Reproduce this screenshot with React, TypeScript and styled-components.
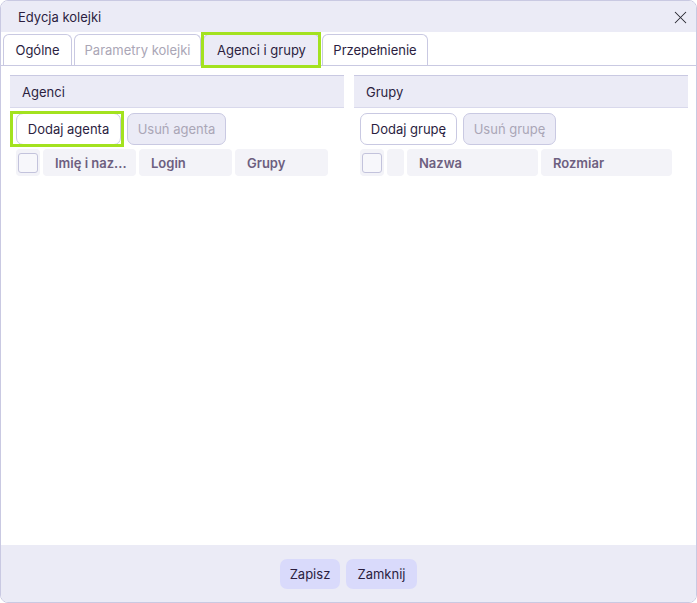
import { createGlobalStyle, styled } from 'styled-components';
import { X } from 'lucide-react';

const GlobalStyle = createGlobalStyle`
  html, body {
    margin: 0;
    padding: 0;
    background: #ffffff;
  }
  body {
    font-family: Inter, 'Noto Sans', sans-serif;
    font-size: 13px;
    color: #2b1e3f;
  }
`;

const tabs = [
  { label: 'Ogólne', width: 69 },
  { label: 'Parametry kolejki', width: 127, disabled: true },
  { label: 'Agenci i grupy', width: 117, active: true },
  { label: 'Przepełnienie', width: 106 },
];

const App = () => {
  return (
    <>
      <GlobalStyle />
      <Dialog>
        <Header>
          <Title>Edycja kolejki</Title>
          <CloseButton aria-label="Zamknij">
            <X size={21} strokeWidth={1.2} />
          </CloseButton>
        </Header>
        <TabBar>
          {tabs.map((t) => (
            <Tab key={t.label} $width={t.width} $active={t.active} $disabled={t.disabled}>
              {t.label}
            </Tab>
          ))}
        </TabBar>
        <Body>
          <Panel>
            <PanelHeader>Agenci</PanelHeader>
            <ButtonRow>
              <ActionButton $width={105} $focused>
                Dodaj agenta
              </ActionButton>
              <ActionButton $width={99} disabled>
                Usuń agenta
              </ActionButton>
            </ButtonRow>
            <TableHead $columns="24px 93px 93px 93px">
              <CheckCell>
                <CheckBox />
              </CheckCell>
              <HeadCell>Imię i naz...</HeadCell>
              <HeadCell>Login</HeadCell>
              <HeadCell>Grupy</HeadCell>
            </TableHead>
          </Panel>
          <Panel>
            <PanelHeader>Grupy</PanelHeader>
            <ButtonRow>
              <ActionButton $width={97}>Dodaj grupę</ActionButton>
              <ActionButton $width={93} disabled>
                Usuń grupę
              </ActionButton>
            </ButtonRow>
            <TableHead $columns="24px 17px 131px 131px">
              <CheckCell>
                <CheckBox />
              </CheckCell>
              <HeadCell />
              <HeadCell>Nazwa</HeadCell>
              <HeadCell>Rozmiar</HeadCell>
            </TableHead>
          </Panel>
        </Body>
        <Footer>
          <FooterButton $width={60}>Zapisz</FooterButton>
          <FooterButton $width={71}>Zamknij</FooterButton>
        </Footer>
      </Dialog>
    </>
  );
};

export default App;

const focusGreen = '#a3e21f';

const Dialog = styled.div`
  box-sizing: border-box;
  width: 697px;
  height: 603px;
  display: flex;
  flex-direction: column;
  border: 1px solid #c9c9e2;
  border-radius: 8px;
  overflow: hidden;
  background: #ffffff;
`;

const Header = styled.div`
  height: 31px;
  flex-shrink: 0;
  display: flex;
  align-items: center;
  justify-content: space-between;
  padding: 1px 4px 0 17px;
  box-sizing: border-box;
  background: #ebebf6;
`;

const Title = styled.div`
  font-size: 13px;
  color: #2b1e3f;
`;

const CloseButton = styled.button`
  display: flex;
  align-items: center;
  justify-content: center;
  width: 24px;
  height: 24px;
  padding: 0;
  border: none;
  background: transparent;
  color: #26262f;
`;

const TabBar = styled.div`
  height: 34px;
  flex-shrink: 0;
  display: flex;
  align-items: flex-end;
  gap: 2px;
  padding-left: 2px;
  box-sizing: border-box;
  border-bottom: 1px solid #c9c9e2;
`;

const Tab = styled.div<{ $width: number; $active?: boolean; $disabled?: boolean }>`
  position: relative;
  box-sizing: border-box;
  width: ${(p) => p.$width}px;
  height: 31px;
  display: flex;
  align-items: center;
  justify-content: center;
  border: 1px solid #c9c9e2;
  border-bottom: none;
  border-radius: 6px 6px 0 0;
  font-size: 13px;
  background: ${(p) => (p.$active ? '#ebebf6' : '#ffffff')};
  color: ${(p) => (p.$disabled ? '#aaa6b6' : '#2b1e3f')};

  &::after {
    content: '';
    display: ${(p) => (p.$active ? 'block' : 'none')};
    position: absolute;
    top: -3px;
    bottom: -3px;
    left: -3px;
    right: -2px;
    border: 3px solid ${focusGreen};
    pointer-events: none;
  }
`;

const Body = styled.div`
  flex: 1;
  display: grid;
  grid-template-columns: 334px 334px;
  gap: 10px;
  align-items: start;
  padding: 9px 8px 9px 9px;
`;

const Panel = styled.div`
  display: flex;
  flex-direction: column;
`;

const PanelHeader = styled.div`
  box-sizing: border-box;
  height: 33px;
  display: flex;
  align-items: center;
  padding-left: 12px;
  background: #ebebf6;
  border-top: 1px solid #c9c9e2;
  border-bottom: 1px solid #d9d9ec;
  font-size: 13px;
  color: #2b1e3f;
`;

const ButtonRow = styled.div`
  display: flex;
  gap: 6px;
  padding: 5px 0 0 6px;
`;

const ActionButton = styled.button<{ $width: number; $focused?: boolean }>`
  position: relative;
  box-sizing: border-box;
  width: ${(p) => p.$width}px;
  height: 32px;
  padding: 0;
  border: 1px solid #c9c9e2;
  border-radius: 7px;
  background: #ffffff;
  font-family: Inter, 'Noto Sans', sans-serif;
  font-size: 13px;
  color: #2b1e3f;

  &::after {
    content: '';
    display: ${(p) => (p.$focused ? 'block' : 'none')};
    position: absolute;
    top: -3px;
    bottom: -3px;
    left: -7px;
    right: -4px;
    border: 3px solid ${focusGreen};
    pointer-events: none;
  }

  &:disabled {
    background: #ebebf6;
    color: #aaa6b6;
  }
`;

const TableHead = styled.div<{ $columns: string }>`
  display: grid;
  grid-template-columns: ${(p) => p.$columns};
  gap: 3px;
  height: 27px;
  margin: 4px 0 0 6px;
`;

const CheckCell = styled.div`
  display: flex;
  align-items: center;
  justify-content: center;
  background: #f3f3f8;
  border-radius: 4px;
`;

const CheckBox = styled.div`
  box-sizing: border-box;
  width: 20px;
  height: 20px;
  border: 1px solid #c3c3dc;
  border-radius: 3px;
  background: #f7f7fb;
`;

const HeadCell = styled.div`
  display: flex;
  align-items: center;
  padding-left: 12px;
  background: #f3f3f8;
  border-radius: 4px;
  font-size: 13px;
  font-weight: 600;
  color: #6d5f80;
  white-space: nowrap;
  overflow: hidden;
`;

const Footer = styled.div`
  height: 57px;
  flex-shrink: 0;
  display: flex;
  align-items: center;
  justify-content: center;
  gap: 6px;
  background: #ebebf6;
`;

const FooterButton = styled.button<{ $width: number }>`
  width: ${(p) => p.$width}px;
  height: 30px;
  padding: 0;
  border: none;
  border-radius: 7px;
  background: #d9dafb;
  font-family: Inter, 'Noto Sans', sans-serif;
  font-size: 13px;
  color: #2b1e3f;
`;
